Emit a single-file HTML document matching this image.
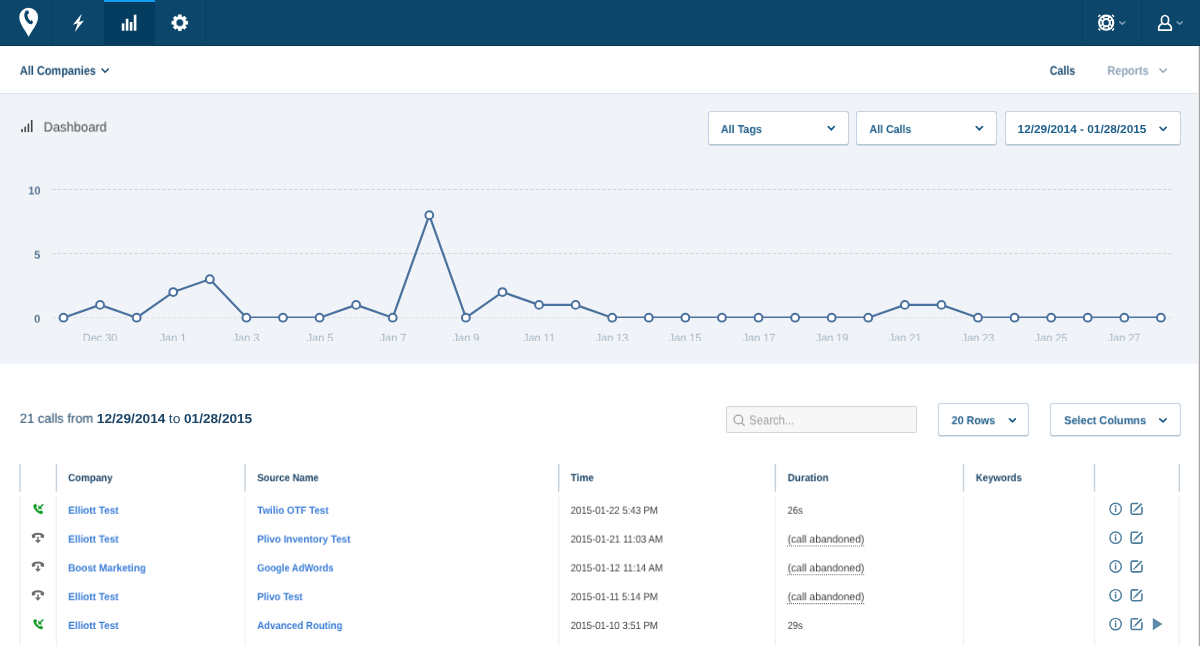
<!DOCTYPE html>
<html><head><meta charset="utf-8"><title>Dashboard</title>
<style>
html,body{margin:0;padding:0;}
body{width:1200px;height:646px;overflow:hidden;position:relative;background:#fff;font-family:"Liberation Sans",sans-serif;}
.abs{position:absolute;}
.t{text-rendering:geometricPrecision;will-change:transform;position:absolute;white-space:nowrap;line-height:20px;height:20px;transform-origin:0 50%;font-family:"Liberation Sans",sans-serif;}
.t b{font-weight:700;}
#nav{left:0;top:0;width:1200px;height:46px;background:#0c476b;}
#nav .dv{position:absolute;top:0;width:1px;height:46px;background:#0a3d5e;}
#navb{left:0;top:45px;width:1200px;height:1px;background:#0a3b5b;}
#act{left:104px;top:0;width:50.6px;height:46px;background:#053d60;}
#act i{position:absolute;left:0;top:0;width:50.6px;height:2px;background:#119ff6;box-shadow:0 1px 0 rgba(0,20,40,0.28);}
#sub{left:0;top:46px;width:1200px;height:47px;background:#fff;}
#subb{left:0;top:93px;width:1200px;height:1px;background:#dde4ea;}
#dash{left:0;top:94px;width:1198px;height:269.5px;background:#f0f4f8;}
#redge{left:1198px;top:46px;width:2px;height:600px;background:linear-gradient(90deg,#e6e6e6 0,#e6e6e6 50%,#a6a6a6 50%,#a6a6a6 100%);}
.btn{position:absolute;box-sizing:border-box;background:#fff;border:1px solid #c5d4e0;border-bottom-color:#b4c6d4;border-radius:3px;box-shadow:0 1px 0 rgba(170,190,205,0.45);}
#search{position:absolute;box-sizing:border-box;left:726px;top:406px;width:191px;height:27px;background:#f7f7f7;border:1px solid #d2d5d7;border-radius:2px;}
.hs{position:absolute;top:464px;height:28px;width:2px;background:#cbd5df;}
.bs{position:absolute;top:496px;height:150px;width:1px;background:#eef1f4;}
svg{position:absolute;overflow:visible;}
</style></head>
<body>
<div id="nav" class="abs">
  <div id="act" class="abs"><i></i></div>
  <div class="dv" style="left:52px"></div>
  <div class="dv" style="left:103px;background:#0b4366"></div>
  <div class="dv" style="left:205px"></div>
  <div class="dv" style="left:1082px"></div>
  <div class="dv" style="left:1141px"></div>
</div>
<div id="navb" class="abs"></div>
<div id="sub" class="abs"></div>
<div id="subb" class="abs"></div>
<div id="dash" class="abs"></div>
<div id="redge" class="abs"></div>

<div class="btn" style="left:708px;top:111px;width:141px;height:34px"></div>
<div class="btn" style="left:856px;top:111px;width:141px;height:34px"></div>
<div class="btn" style="left:1005px;top:111px;width:176px;height:34px"></div>
<div id="search"></div>
<div class="btn" style="left:938px;top:403px;width:91px;height:33px"></div>
<div class="btn" style="left:1050px;top:403px;width:131px;height:33px"></div>

<svg width="1200" height="646" viewBox="0 0 1200 646" style="left:0;top:0">
<path d="M28.65 36.7 C26.2 31.3 19.3 24.2 19.3 17.15 A9.35 9.35 0 0 1 38 17.15 C38 24.2 31.1 31.3 28.65 36.7Z" fill="#fff"/>
<path d="M26.3 10.6 L28.3 10.4 L29 13.6 L27.4 14.6 C27.4 17.5 28.8 19.8 30.6 20.9 L32 19.9 L33 22.6 L31.6 24.2 C27.5 24.6 23.6 18 24.4 14 C24.7 12.4 25.4 11.2 26.3 10.6Z" fill="#0c476b"/>
<path d="M81.7 13.8 L72.9 24.7 L77.7 23.3 L74.8 32.1 L84 20.6 L79.1 22.1 Z" fill="#fff"/>
<rect x="121.8" y="23.4" width="2.6" height="7.30" fill="#fff"/>
<rect x="125.8" y="18.8" width="2.6" height="11.90" fill="#fff"/>
<rect x="129.8" y="22.0" width="2.6" height="8.70" fill="#fff"/>
<rect x="133.8" y="14.7" width="2.6" height="16.00" fill="#fff"/>
<path d="M185.87 21.02 L187.75 21.17 L187.75 24.23 L185.87 24.38 L185.28 25.81 L186.51 27.24 L184.34 29.41 L182.91 28.18 L181.48 28.77 L181.33 30.65 L178.27 30.65 L178.12 28.77 L176.69 28.18 L175.26 29.41 L173.09 27.24 L174.32 25.81 L173.73 24.38 L171.85 24.23 L171.85 21.17 L173.73 21.02 L174.32 19.59 L173.09 18.16 L175.26 15.99 L176.69 17.22 L178.12 16.63 L178.27 14.75 L181.33 14.75 L181.48 16.63 L182.91 17.22 L184.34 15.99 L186.51 18.16 L185.28 19.59Z M183.50 22.70 A3.7 3.7 0 1 0 176.10 22.70 A3.7 3.7 0 1 0 183.50 22.70Z" fill="#fff" fill-rule="evenodd" stroke="#fff" stroke-width="0.5" stroke-linejoin="round"/>
<circle cx="1106.2" cy="22.7" r="5.35" fill="none" stroke="#fff" stroke-width="5.5"/>
<path d="M1111.21 20.97 A5.3 5.3 0 0 1 1111.21 24.43" fill="none" stroke="#0c476b" stroke-width="1.35"/>
<path d="M1107.93 27.71 A5.3 5.3 0 0 1 1104.47 27.71" fill="none" stroke="#0c476b" stroke-width="1.35"/>
<path d="M1101.19 24.43 A5.3 5.3 0 0 1 1101.19 20.97" fill="none" stroke="#0c476b" stroke-width="1.35"/>
<path d="M1104.47 17.69 A5.3 5.3 0 0 1 1107.93 17.69" fill="none" stroke="#0c476b" stroke-width="1.35"/>
<circle cx="1110.02" cy="26.52" r="1.0" fill="#0c476b"/>
<path d="M1113.95 28.54 A9.7 9.7 0 0 1 1112.04 30.45" fill="none" stroke="#fff" stroke-width="1.5"/>
<circle cx="1102.38" cy="26.52" r="1.0" fill="#0c476b"/>
<path d="M1100.36 30.45 A9.7 9.7 0 0 1 1098.45 28.54" fill="none" stroke="#fff" stroke-width="1.5"/>
<circle cx="1102.38" cy="18.88" r="1.0" fill="#0c476b"/>
<path d="M1098.45 16.86 A9.7 9.7 0 0 1 1100.36 14.95" fill="none" stroke="#fff" stroke-width="1.5"/>
<circle cx="1110.02" cy="18.88" r="1.0" fill="#0c476b"/>
<path d="M1112.04 14.95 A9.7 9.7 0 0 1 1113.95 16.86" fill="none" stroke="#fff" stroke-width="1.5"/>
<path d="M1119.67 21.89 L1122.25 24.15 L1124.83 21.89" fill="none" stroke="#7d9ab3" stroke-width="1.5" stroke-linecap="round" stroke-linejoin="miter"/>
<g fill="none" stroke="#fff" stroke-width="1.7" stroke-linejoin="round"><ellipse cx="1165" cy="19.9" rx="3.6" ry="4.4"/><path d="M1162.6 23.4 C1160.8 24.4 1158.7 25.2 1158.7 27.8 V30.1 H1171.3 V27.8 C1171.3 25.2 1169.2 24.4 1167.4 23.4"/></g>
<path d="M1177.08 21.89 L1179.65 24.15 L1182.23 21.89" fill="none" stroke="#7d9ab3" stroke-width="1.5" stroke-linecap="round" stroke-linejoin="miter"/>
<path d="M102.02 69.04 L105.15 72.19 L108.28 69.04" fill="none" stroke="#1d4e74" stroke-width="1.6" stroke-linecap="round" stroke-linejoin="miter"/>
<path d="M1159.97 69.09 L1163.15 72.25 L1166.33 69.09" fill="none" stroke="#8fa5ba" stroke-width="1.5" stroke-linecap="round" stroke-linejoin="miter"/>
<rect x="21.2" y="129.0" width="1.6" height="3.10" fill="#444"/>
<rect x="24.4" y="126.7" width="1.6" height="5.40" fill="#444"/>
<rect x="27.6" y="123.6" width="1.6" height="8.50" fill="#444"/>
<rect x="30.9" y="120.0" width="1.6" height="12.10" fill="#444"/>
<path d="M828.29 126.72 L831.25 129.69 L834.21 126.72" fill="none" stroke="#1f5f8b" stroke-width="1.75" stroke-linecap="round" stroke-linejoin="miter"/>
<path d="M976.29 126.72 L979.35 129.69 L982.41 126.72" fill="none" stroke="#1f5f8b" stroke-width="1.75" stroke-linecap="round" stroke-linejoin="miter"/>
<path d="M1160.09 127.32 L1163.15 130.29 L1166.21 127.32" fill="none" stroke="#1f5f8b" stroke-width="1.75" stroke-linecap="round" stroke-linejoin="miter"/>
<path d="M1009.49 418.82 L1012.40 421.79 L1015.31 418.82" fill="none" stroke="#1f5f8b" stroke-width="1.75" stroke-linecap="round" stroke-linejoin="miter"/>
<path d="M1159.79 418.82 L1162.95 421.79 L1166.11 418.82" fill="none" stroke="#1f5f8b" stroke-width="1.75" stroke-linecap="round" stroke-linejoin="miter"/>
<g fill="none" stroke="#a6a6a6" stroke-width="1.35" stroke-linecap="round"><circle cx="738.4" cy="419.4" r="4.3"/><path d="M741.6 422.6 L744.1 425.2"/></g>
</svg>

<svg width="1200" height="646" viewBox="0 0 1200 646" style="left:0;top:0">
<path d="M52 189.5 H1172" stroke="#d1d5d9" stroke-width="1" stroke-dasharray="3.7 1.8" fill="none"/>
<path d="M52 253.6 H1172" stroke="#d1d5d9" stroke-width="1" stroke-dasharray="3.7 1.8" fill="none"/>
<path d="M52 317.7 H1172" stroke="#dfe1e3" stroke-width="1" stroke-dasharray="3.7 1.8" fill="none"/>
<defs><clipPath id="plotclip"><rect x="40" y="150" width="1160" height="167.9"/></clipPath></defs>
<path d="M63.50 317.70 L100.08 304.88 L136.66 317.70 L173.24 292.06 L209.82 279.24 L246.40 317.70 L282.98 317.70 L319.56 317.70 L356.14 304.88 L392.72 317.70 L429.30 215.14 L465.88 317.70 L502.46 292.06 L539.04 304.88 L575.62 304.88 L612.20 317.70 L648.78 317.70 L685.36 317.70 L721.94 317.70 L758.52 317.70 L795.10 317.70 L831.68 317.70 L868.26 317.70 L904.84 304.88 L941.42 304.88 L978.00 317.70 L1014.58 317.70 L1051.16 317.70 L1087.74 317.70 L1124.32 317.70 L1160.90 317.70" fill="none" stroke="#4b729f" stroke-width="2.2" stroke-linejoin="round" clip-path="url(#plotclip)"/>
<circle cx="63.50" cy="317.70" r="3.9" fill="#fff" stroke="#4b729f" stroke-width="2"/>
<circle cx="100.08" cy="304.88" r="3.9" fill="#fff" stroke="#4b729f" stroke-width="2"/>
<circle cx="136.66" cy="317.70" r="3.9" fill="#fff" stroke="#4b729f" stroke-width="2"/>
<circle cx="173.24" cy="292.06" r="3.9" fill="#fff" stroke="#4b729f" stroke-width="2"/>
<circle cx="209.82" cy="279.24" r="3.9" fill="#fff" stroke="#4b729f" stroke-width="2"/>
<circle cx="246.40" cy="317.70" r="3.9" fill="#fff" stroke="#4b729f" stroke-width="2"/>
<circle cx="282.98" cy="317.70" r="3.9" fill="#fff" stroke="#4b729f" stroke-width="2"/>
<circle cx="319.56" cy="317.70" r="3.9" fill="#fff" stroke="#4b729f" stroke-width="2"/>
<circle cx="356.14" cy="304.88" r="3.9" fill="#fff" stroke="#4b729f" stroke-width="2"/>
<circle cx="392.72" cy="317.70" r="3.9" fill="#fff" stroke="#4b729f" stroke-width="2"/>
<circle cx="429.30" cy="215.14" r="3.9" fill="#fff" stroke="#4b729f" stroke-width="2"/>
<circle cx="465.88" cy="317.70" r="3.9" fill="#fff" stroke="#4b729f" stroke-width="2"/>
<circle cx="502.46" cy="292.06" r="3.9" fill="#fff" stroke="#4b729f" stroke-width="2"/>
<circle cx="539.04" cy="304.88" r="3.9" fill="#fff" stroke="#4b729f" stroke-width="2"/>
<circle cx="575.62" cy="304.88" r="3.9" fill="#fff" stroke="#4b729f" stroke-width="2"/>
<circle cx="612.20" cy="317.70" r="3.9" fill="#fff" stroke="#4b729f" stroke-width="2"/>
<circle cx="648.78" cy="317.70" r="3.9" fill="#fff" stroke="#4b729f" stroke-width="2"/>
<circle cx="685.36" cy="317.70" r="3.9" fill="#fff" stroke="#4b729f" stroke-width="2"/>
<circle cx="721.94" cy="317.70" r="3.9" fill="#fff" stroke="#4b729f" stroke-width="2"/>
<circle cx="758.52" cy="317.70" r="3.9" fill="#fff" stroke="#4b729f" stroke-width="2"/>
<circle cx="795.10" cy="317.70" r="3.9" fill="#fff" stroke="#4b729f" stroke-width="2"/>
<circle cx="831.68" cy="317.70" r="3.9" fill="#fff" stroke="#4b729f" stroke-width="2"/>
<circle cx="868.26" cy="317.70" r="3.9" fill="#fff" stroke="#4b729f" stroke-width="2"/>
<circle cx="904.84" cy="304.88" r="3.9" fill="#fff" stroke="#4b729f" stroke-width="2"/>
<circle cx="941.42" cy="304.88" r="3.9" fill="#fff" stroke="#4b729f" stroke-width="2"/>
<circle cx="978.00" cy="317.70" r="3.9" fill="#fff" stroke="#4b729f" stroke-width="2"/>
<circle cx="1014.58" cy="317.70" r="3.9" fill="#fff" stroke="#4b729f" stroke-width="2"/>
<circle cx="1051.16" cy="317.70" r="3.9" fill="#fff" stroke="#4b729f" stroke-width="2"/>
<circle cx="1087.74" cy="317.70" r="3.9" fill="#fff" stroke="#4b729f" stroke-width="2"/>
<circle cx="1124.32" cy="317.70" r="3.9" fill="#fff" stroke="#4b729f" stroke-width="2"/>
<circle cx="1160.90" cy="317.70" r="3.9" fill="#fff" stroke="#4b729f" stroke-width="2"/>
</svg>
<span class="t" style="right:1159.5px;top:181px;font-size:11.3px;font-weight:700;color:#4d6d8c;text-shadow:0 0 1.5px #fff,0 0 1.5px #fff,0 0 2.5px #fff;transform-origin:100% 50%;transform:translate(0px,0.50px) scaleX(0.98)">10</span>
<span class="t" style="right:1159.5px;top:245px;font-size:11.3px;font-weight:700;color:#4d6d8c;text-shadow:0 0 1.5px #fff,0 0 1.5px #fff,0 0 2.5px #fff;transform-origin:100% 50%;transform:translate(0px,0.60px) scaleX(0.98)">5</span>
<span class="t" style="right:1159.5px;top:309px;font-size:11.3px;font-weight:700;color:#4d6d8c;text-shadow:0 0 1.5px #fff,0 0 1.5px #fff,0 0 2.5px #fff;transform-origin:100% 50%;transform:translate(0px,0.70px) scaleX(0.98)">0</span>
<div class="abs" style="left:0;top:326px;width:1200px;height:20px;clip-path:inset(0 0 5.5px 0)">
<span class="t" style="left:70.1px;width:60px;text-align:center;top:1.6px;font-size:12px;color:#a7b6c6;transform-origin:50% 50%;transform:scaleX(0.91)">Dec 30</span>
<span class="t" style="left:143.2px;width:60px;text-align:center;top:1.6px;font-size:12px;color:#a7b6c6;transform-origin:50% 50%;transform:scaleX(0.91)">Jan 1</span>
<span class="t" style="left:216.4px;width:60px;text-align:center;top:1.6px;font-size:12px;color:#a7b6c6;transform-origin:50% 50%;transform:scaleX(0.91)">Jan 3</span>
<span class="t" style="left:289.6px;width:60px;text-align:center;top:1.6px;font-size:12px;color:#a7b6c6;transform-origin:50% 50%;transform:scaleX(0.91)">Jan 5</span>
<span class="t" style="left:362.7px;width:60px;text-align:center;top:1.6px;font-size:12px;color:#a7b6c6;transform-origin:50% 50%;transform:scaleX(0.91)">Jan 7</span>
<span class="t" style="left:435.9px;width:60px;text-align:center;top:1.6px;font-size:12px;color:#a7b6c6;transform-origin:50% 50%;transform:scaleX(0.91)">Jan 9</span>
<span class="t" style="left:509.0px;width:60px;text-align:center;top:1.6px;font-size:12px;color:#a7b6c6;transform-origin:50% 50%;transform:scaleX(0.91)">Jan 11</span>
<span class="t" style="left:582.2px;width:60px;text-align:center;top:1.6px;font-size:12px;color:#a7b6c6;transform-origin:50% 50%;transform:scaleX(0.91)">Jan 13</span>
<span class="t" style="left:655.4px;width:60px;text-align:center;top:1.6px;font-size:12px;color:#a7b6c6;transform-origin:50% 50%;transform:scaleX(0.91)">Jan 15</span>
<span class="t" style="left:728.5px;width:60px;text-align:center;top:1.6px;font-size:12px;color:#a7b6c6;transform-origin:50% 50%;transform:scaleX(0.91)">Jan 17</span>
<span class="t" style="left:801.7px;width:60px;text-align:center;top:1.6px;font-size:12px;color:#a7b6c6;transform-origin:50% 50%;transform:scaleX(0.91)">Jan 19</span>
<span class="t" style="left:874.8px;width:60px;text-align:center;top:1.6px;font-size:12px;color:#a7b6c6;transform-origin:50% 50%;transform:scaleX(0.91)">Jan 21</span>
<span class="t" style="left:948.0px;width:60px;text-align:center;top:1.6px;font-size:12px;color:#a7b6c6;transform-origin:50% 50%;transform:scaleX(0.91)">Jan 23</span>
<span class="t" style="left:1021.2px;width:60px;text-align:center;top:1.6px;font-size:12px;color:#a7b6c6;transform-origin:50% 50%;transform:scaleX(0.91)">Jan 25</span>
<span class="t" style="left:1094.3px;width:60px;text-align:center;top:1.6px;font-size:12px;color:#a7b6c6;transform-origin:50% 50%;transform:scaleX(0.91)">Jan 27</span>
</div>

<svg width="1200" height="646" viewBox="0 0 1200 646" style="left:0;top:0">
<g transform="translate(0,509.0)"><path d="M33.2 -3.6 C33.6 0.6 37.4 4.6 41.6 5.2 L43.4 3.2 L41.2 1.2 L39.8 2.2 C38.2 1.4 36.8 -0.2 36.2 -1.8 L37.2 -3.2 L35.4 -5.4 Z" fill="#1a9e2e"/><path d="M43.3 -4.7 L40 -1.4" stroke="#1a9e2e" stroke-width="1.5" fill="none"/><path d="M38.3 -3.9 L38.3 0.2 L42.4 0.2 Z" fill="#1a9e2e"/></g>
<g transform="translate(1115.6,508.9)"><circle r="5.7" fill="none" stroke="#4b7d9d" stroke-width="1.4"/><circle cx="0" cy="-2.7" r="0.85" fill="#4b7d9d"/><rect x="-0.75" y="-1.3" width="1.5" height="4.4" fill="#4b7d9d"/></g>
<g transform="translate(1136.55,508.9)" fill="none" stroke="#4b7d9d" stroke-width="1.6"><path d="M1.6 -5.4 H-3.8 a1.6 1.6 0 0 0 -1.6 1.6 V3.8 a1.6 1.6 0 0 0 1.6 1.6 H3.8 a1.6 1.6 0 0 0 1.6 -1.6 V-1.8"/><path d="M5.2 -5.3 L-1.6 1.5" stroke-width="1.7"/><circle cx="-2.5" cy="2.4" r="0.8" fill="#4b7d9d" stroke="none"/></g>
<g transform="translate(0,538.0)"><path d="M32.6 -1.6 C33 -5.2 42.9 -5.2 43.3 -1.6" fill="none" stroke="#6e6e6e" stroke-width="2.0"/><path d="M31.7 -2.6 L35.3 -3 L35.3 -0.6 L32.3 0.2 Z M44.2 -2.6 L40.6 -3 L40.6 -0.6 L43.6 0.2 Z" fill="#6e6e6e"/><path d="M37.95 -1.2 V3" stroke="#6e6e6e" stroke-width="1.5" fill="none"/><path d="M34.9 2 H41 L37.95 5.2 Z" fill="#6e6e6e"/></g>
<g transform="translate(1115.6,537.7)"><circle r="5.7" fill="none" stroke="#4b7d9d" stroke-width="1.4"/><circle cx="0" cy="-2.7" r="0.85" fill="#4b7d9d"/><rect x="-0.75" y="-1.3" width="1.5" height="4.4" fill="#4b7d9d"/></g>
<g transform="translate(1136.55,537.7)" fill="none" stroke="#4b7d9d" stroke-width="1.6"><path d="M1.6 -5.4 H-3.8 a1.6 1.6 0 0 0 -1.6 1.6 V3.8 a1.6 1.6 0 0 0 1.6 1.6 H3.8 a1.6 1.6 0 0 0 1.6 -1.6 V-1.8"/><path d="M5.2 -5.3 L-1.6 1.5" stroke-width="1.7"/><circle cx="-2.5" cy="2.4" r="0.8" fill="#4b7d9d" stroke="none"/></g>
<path d="M787.2 546.0 H865" stroke="#6f6f6f" stroke-width="1.1" stroke-dasharray="0.97 0.97" fill="none"/>
<g transform="translate(0,566.8)"><path d="M32.6 -1.6 C33 -5.2 42.9 -5.2 43.3 -1.6" fill="none" stroke="#6e6e6e" stroke-width="2.0"/><path d="M31.7 -2.6 L35.3 -3 L35.3 -0.6 L32.3 0.2 Z M44.2 -2.6 L40.6 -3 L40.6 -0.6 L43.6 0.2 Z" fill="#6e6e6e"/><path d="M37.95 -1.2 V3" stroke="#6e6e6e" stroke-width="1.5" fill="none"/><path d="M34.9 2 H41 L37.95 5.2 Z" fill="#6e6e6e"/></g>
<g transform="translate(1115.6,566.5)"><circle r="5.7" fill="none" stroke="#4b7d9d" stroke-width="1.4"/><circle cx="0" cy="-2.7" r="0.85" fill="#4b7d9d"/><rect x="-0.75" y="-1.3" width="1.5" height="4.4" fill="#4b7d9d"/></g>
<g transform="translate(1136.55,566.5)" fill="none" stroke="#4b7d9d" stroke-width="1.6"><path d="M1.6 -5.4 H-3.8 a1.6 1.6 0 0 0 -1.6 1.6 V3.8 a1.6 1.6 0 0 0 1.6 1.6 H3.8 a1.6 1.6 0 0 0 1.6 -1.6 V-1.8"/><path d="M5.2 -5.3 L-1.6 1.5" stroke-width="1.7"/><circle cx="-2.5" cy="2.4" r="0.8" fill="#4b7d9d" stroke="none"/></g>
<path d="M787.2 574.8 H865" stroke="#6f6f6f" stroke-width="1.1" stroke-dasharray="0.97 0.97" fill="none"/>
<g transform="translate(0,595.6)"><path d="M32.6 -1.6 C33 -5.2 42.9 -5.2 43.3 -1.6" fill="none" stroke="#6e6e6e" stroke-width="2.0"/><path d="M31.7 -2.6 L35.3 -3 L35.3 -0.6 L32.3 0.2 Z M44.2 -2.6 L40.6 -3 L40.6 -0.6 L43.6 0.2 Z" fill="#6e6e6e"/><path d="M37.95 -1.2 V3" stroke="#6e6e6e" stroke-width="1.5" fill="none"/><path d="M34.9 2 H41 L37.95 5.2 Z" fill="#6e6e6e"/></g>
<g transform="translate(1115.6,595.3)"><circle r="5.7" fill="none" stroke="#4b7d9d" stroke-width="1.4"/><circle cx="0" cy="-2.7" r="0.85" fill="#4b7d9d"/><rect x="-0.75" y="-1.3" width="1.5" height="4.4" fill="#4b7d9d"/></g>
<g transform="translate(1136.55,595.3)" fill="none" stroke="#4b7d9d" stroke-width="1.6"><path d="M1.6 -5.4 H-3.8 a1.6 1.6 0 0 0 -1.6 1.6 V3.8 a1.6 1.6 0 0 0 1.6 1.6 H3.8 a1.6 1.6 0 0 0 1.6 -1.6 V-1.8"/><path d="M5.2 -5.3 L-1.6 1.5" stroke-width="1.7"/><circle cx="-2.5" cy="2.4" r="0.8" fill="#4b7d9d" stroke="none"/></g>
<path d="M787.2 603.6 H865" stroke="#6f6f6f" stroke-width="1.1" stroke-dasharray="0.97 0.97" fill="none"/>
<g transform="translate(0,624.2)"><path d="M33.2 -3.6 C33.6 0.6 37.4 4.6 41.6 5.2 L43.4 3.2 L41.2 1.2 L39.8 2.2 C38.2 1.4 36.8 -0.2 36.2 -1.8 L37.2 -3.2 L35.4 -5.4 Z" fill="#1a9e2e"/><path d="M43.3 -4.7 L40 -1.4" stroke="#1a9e2e" stroke-width="1.5" fill="none"/><path d="M38.3 -3.9 L38.3 0.2 L42.4 0.2 Z" fill="#1a9e2e"/></g>
<g transform="translate(1115.6,624.1)"><circle r="5.7" fill="none" stroke="#4b7d9d" stroke-width="1.4"/><circle cx="0" cy="-2.7" r="0.85" fill="#4b7d9d"/><rect x="-0.75" y="-1.3" width="1.5" height="4.4" fill="#4b7d9d"/></g>
<g transform="translate(1136.55,624.1)" fill="none" stroke="#4b7d9d" stroke-width="1.6"><path d="M1.6 -5.4 H-3.8 a1.6 1.6 0 0 0 -1.6 1.6 V3.8 a1.6 1.6 0 0 0 1.6 1.6 H3.8 a1.6 1.6 0 0 0 1.6 -1.6 V-1.8"/><path d="M5.2 -5.3 L-1.6 1.5" stroke-width="1.7"/><circle cx="-2.5" cy="2.4" r="0.8" fill="#4b7d9d" stroke="none"/></g>
<path d="M1152.8 617.9 L1162.6 624.1 L1152.8 630.3Z" fill="#5d8aa6"/>
<rect x="19.20" y="463.8" width="1.4" height="27.8" fill="#c6d0db"/>
<rect x="19.20" y="496" width="1.4" height="150" fill="#eff2f5"/>
<rect x="55.70" y="463.8" width="1.4" height="27.8" fill="#c6d0db"/>
<rect x="55.70" y="496" width="1.4" height="150" fill="#eff2f5"/>
<rect x="244.30" y="463.8" width="1.4" height="27.8" fill="#c6d0db"/>
<rect x="244.30" y="496" width="1.4" height="150" fill="#eff2f5"/>
<rect x="558.00" y="463.8" width="1.4" height="27.8" fill="#c6d0db"/>
<rect x="558.00" y="496" width="1.4" height="150" fill="#eff2f5"/>
<rect x="774.70" y="463.8" width="1.4" height="27.8" fill="#c6d0db"/>
<rect x="774.70" y="496" width="1.4" height="150" fill="#eff2f5"/>
<rect x="962.80" y="463.8" width="1.4" height="27.8" fill="#c6d0db"/>
<rect x="962.80" y="496" width="1.4" height="150" fill="#eff2f5"/>
<rect x="1093.80" y="463.8" width="1.4" height="27.8" fill="#c6d0db"/>
<rect x="1093.80" y="496" width="1.4" height="150" fill="#eff2f5"/>
<rect x="1178.60" y="463.8" width="1.4" height="27.8" fill="#c6d0db"/>
<rect x="1178.60" y="496" width="1.4" height="150" fill="#eff2f5"/>
</svg>

<span class="t" style="left:19px;top:60px;font-size:12.5px;font-weight:700;color:#184a70;transform:translate(0.80px,0.70px) scaleX(0.8776)">All Companies</span>
<span class="t" style="left:1049px;top:60px;font-size:12.5px;font-weight:700;color:#184a70;transform:translate(0.80px,0.70px) scaleX(0.8498)">Calls</span>
<span class="t" style="left:1107px;top:60px;font-size:12.5px;font-weight:700;color:#8fa5ba;transform:translate(0.40px,0.70px) scaleX(0.8744)">Reports</span>
<span class="t" style="left:43px;top:117px;font-size:13.4px;font-weight:400;color:#4c4c4c;transform:translate(0.60px,0.50px) scaleX(0.9647)">Dashboard</span>
<span class="t" style="left:720px;top:120px;font-size:11.5px;font-weight:700;color:#1f5f8b;transform:translate(0.80px,0.05px) scaleX(0.9387)">All Tags</span>
<span class="t" style="left:869px;top:120px;font-size:11.5px;font-weight:700;color:#1f5f8b;transform:translate(0.50px,0.05px) scaleX(0.9209)">All Calls</span>
<span class="t" style="left:1017px;top:120px;font-size:11.5px;font-weight:700;color:#1f5f8b;transform:translate(0.60px,0.05px) scaleX(1.0276)">12/29/2014 - 01/28/2015</span>
<span class="t" style="left:19px;top:408px;font-size:13.0px;font-weight:400;color:#1d4567;transform:translate(0.80px,0.70px) scaleX(0.9960)">21 calls from</span>
<span class="t" style="left:96px;top:408px;font-size:13.0px;font-weight:700;color:#1d4567;transform:translate(0.80px,0.70px) scaleX(1.0541)">12/29/2014</span>
<span class="t" style="left:168px;top:408px;font-size:13.0px;font-weight:400;color:#1d4567;transform:translate(0.80px,0.70px) scaleX(1.0697)">to</span>
<span class="t" style="left:184px;top:408px;font-size:13.0px;font-weight:700;color:#1d4567;transform:translate(0.00px,0.70px) scaleX(1.0480)">01/28/2015</span>
<span class="t" style="left:749px;top:410px;font-size:13.0px;font-weight:400;color:#9f9f9f;transform:translate(0.20px,0.40px) scaleX(0.8649)">Search...</span>
<span class="t" style="left:951px;top:411px;font-size:11.5px;font-weight:700;color:#1f5f8b;transform:translate(0.60px,0.20px) scaleX(0.9342)">20 Rows</span>
<span class="t" style="left:1064px;top:411px;font-size:11.5px;font-weight:700;color:#1f5f8b;transform:translate(0.10px,0.20px) scaleX(0.9504)">Select Columns</span>
<span class="t" style="left:68px;top:468px;font-size:10.55px;font-weight:700;color:#1d4567;transform:translate(0.20px,0.20px) scaleX(0.9217)">Company</span>
<span class="t" style="left:257px;top:468px;font-size:10.55px;font-weight:700;color:#1d4567;transform:translate(0.20px,0.20px) scaleX(0.9122)">Source Name</span>
<span class="t" style="left:570px;top:468px;font-size:10.55px;font-weight:700;color:#1d4567;transform:translate(0.70px,0.20px) scaleX(0.9453)">Time</span>
<span class="t" style="left:787px;top:468px;font-size:10.55px;font-weight:700;color:#1d4567;transform:translate(0.70px,0.20px) scaleX(0.9410)">Duration</span>
<span class="t" style="left:975px;top:468px;font-size:10.55px;font-weight:700;color:#1d4567;transform:translate(0.80px,0.20px) scaleX(0.9143)">Keywords</span>
<span class="t" style="left:68px;top:500px;font-size:10.55px;font-weight:700;color:#3b7dd8;transform:translate(0.20px,0.80px) scaleX(0.9484)">Elliott Test</span>
<span class="t" style="left:257px;top:500px;font-size:10.55px;font-weight:700;color:#3b7dd8;transform:translate(0.20px,0.80px) scaleX(0.9265)">Twilio OTF Test</span>
<span class="t" style="left:570px;top:500px;font-size:10.55px;font-weight:400;color:#3e3e3e;transform:translate(0.70px,0.80px) scaleX(0.9067)">2015-01-22 5:43 PM</span>
<span class="t" style="left:787px;top:500px;font-size:10.55px;font-weight:400;color:#3e3e3e;transform:translate(0.70px,0.80px) scaleX(0.8815)">26s</span>
<span class="t" style="left:68px;top:529px;font-size:10.55px;font-weight:700;color:#3b7dd8;transform:translate(0.20px,0.60px) scaleX(0.9484)">Elliott Test</span>
<span class="t" style="left:257px;top:529px;font-size:10.55px;font-weight:700;color:#3b7dd8;transform:translate(0.20px,0.60px) scaleX(0.9371)">Plivo Inventory Test</span>
<span class="t" style="left:570px;top:529px;font-size:10.55px;font-weight:400;color:#3e3e3e;transform:translate(0.70px,0.60px) scaleX(0.9168)">2015-01-21 11:03 AM</span>
<span class="t" style="left:787px;top:529px;font-size:10.55px;font-weight:400;color:#3e3e3e;transform:translate(0.70px,0.60px) scaleX(0.9748)">(call abandoned)</span>
<span class="t" style="left:68px;top:558px;font-size:10.55px;font-weight:700;color:#3b7dd8;transform:translate(0.20px,0.40px) scaleX(0.9392)">Boost Marketing</span>
<span class="t" style="left:257px;top:558px;font-size:10.55px;font-weight:700;color:#3b7dd8;transform:translate(0.20px,0.40px) scaleX(0.8919)">Google AdWords</span>
<span class="t" style="left:570px;top:558px;font-size:10.55px;font-weight:400;color:#3e3e3e;transform:translate(0.70px,0.40px) scaleX(0.9168)">2015-01-12 11:14 AM</span>
<span class="t" style="left:787px;top:558px;font-size:10.55px;font-weight:400;color:#3e3e3e;transform:translate(0.70px,0.40px) scaleX(0.9748)">(call abandoned)</span>
<span class="t" style="left:68px;top:587px;font-size:10.55px;font-weight:700;color:#3b7dd8;transform:translate(0.20px,0.20px) scaleX(0.9484)">Elliott Test</span>
<span class="t" style="left:257px;top:587px;font-size:10.55px;font-weight:700;color:#3b7dd8;transform:translate(0.20px,0.20px) scaleX(0.9236)">Plivo Test</span>
<span class="t" style="left:570px;top:587px;font-size:10.55px;font-weight:400;color:#3e3e3e;transform:translate(0.70px,0.20px) scaleX(0.9143)">2015-01-11 5:14 PM</span>
<span class="t" style="left:787px;top:587px;font-size:10.55px;font-weight:400;color:#3e3e3e;transform:translate(0.70px,0.20px) scaleX(0.9748)">(call abandoned)</span>
<span class="t" style="left:68px;top:616px;font-size:10.55px;font-weight:700;color:#3b7dd8;transform:translate(0.20px,0.00px) scaleX(0.9484)">Elliott Test</span>
<span class="t" style="left:257px;top:616px;font-size:10.55px;font-weight:700;color:#3b7dd8;transform:translate(0.20px,0.00px) scaleX(0.9144)">Advanced Routing</span>
<span class="t" style="left:570px;top:616px;font-size:10.55px;font-weight:400;color:#3e3e3e;transform:translate(0.70px,0.00px) scaleX(0.9067)">2015-01-10 3:51 PM</span>
<span class="t" style="left:787px;top:616px;font-size:10.55px;font-weight:400;color:#3e3e3e;transform:translate(0.70px,0.00px) scaleX(0.8815)">29s</span>
</body></html>
